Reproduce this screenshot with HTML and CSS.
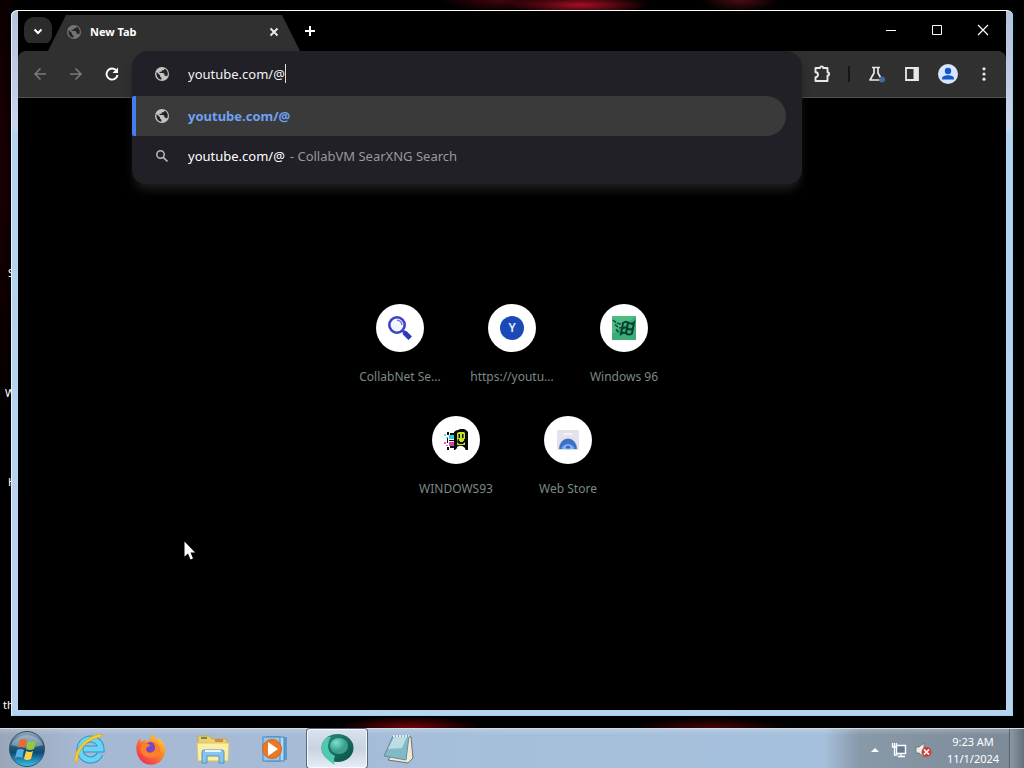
FILE: index.html
```html
<!DOCTYPE html>
<html lang="en">
<head>
<meta charset="utf-8">
<meta name="viewport" content="width=device-width, initial-scale=1">
<title>New Tab</title>
<link rel="stylesheet" href="styles.css">
</head>
<body>
<svg class="symbols" aria-hidden="true">
  <symbol id="globe" viewBox="0 0 16 16"><circle cx="8" cy="8" r="7" fill="currentColor"/><path fill="#242428" d="M2.600 6 6 9.200v1.300l1.500 1.300v1.800C4 13.500 1.800 10 2.600 6zM5.500 7h3.800l1.200 1.200v1.500H12l1 .9c1-1.600 1.100-4 .1-5.600-.5-1.100-1.500-1.900-2.300-2.300L9.600 4.200H7.800v1.600H5.500z"/></symbol>
</svg>
<main class="desktop">
  <span class="desk-label label-a">S</span>
  <span class="desk-label label-b">W</span>
  <span class="desk-label label-c">H</span>
  <span class="desk-label label-d">th</span>
  <section class="window">
    <header class="tabstrip">
      <button class="tab-search" aria-label="Search tabs"><svg width="12" height="12" viewBox="0 0 12 12"><path d="M2.500 4.500 6 8l3.500-3.500" fill="none" stroke="#fff" stroke-width="2"/></svg></button>
      <div class="tab">
        <svg class="tab-globe" width="16" height="16"><use href="#globe"/></svg>
        <span class="tab-title">New Tab</span>
        <button class="plain" aria-label="Close tab"><svg width="10" height="10" viewBox="0 0 10 10"><path d="m1.500 1.500 7 7m0-7-7 7" stroke="#eee" stroke-width="1.800"/></svg></button>
      </div>
      <button class="plain new-tab" aria-label="New tab"><svg width="12" height="12" viewBox="0 0 12 12"><path d="M6 1v10M1 6h10" stroke="#fff" stroke-width="2"/></svg></button>
      <div class="caption">
        <button class="plain" aria-label="Minimize"><svg width="12" height="12" viewBox="0 0 12 12"><path d="M1 6.500h10" stroke="#fff"/></svg></button>
        <button class="plain" aria-label="Maximize"><svg width="12" height="12" viewBox="0 0 12 12"><path d="M1.500 1.500h9v9h-9z" fill="none" stroke="#fff"/></svg></button>
        <button class="plain" aria-label="Close"><svg width="12" height="12" viewBox="0 0 12 12"><path d="m1 1 10 10M11 1 1 11" stroke="#fff" stroke-width="1.200"/></svg></button>
      </div>
    </header>
    <nav class="toolbar">
      <button class="tool dim" aria-label="Back"><svg width="14" height="14" viewBox="0 0 14 14"><path d="M13 7H2m5.500-5.500L2 7l5.500 5.500" fill="none" stroke="currentColor" stroke-width="1.600"/></svg></button>
      <button class="tool dim" aria-label="Forward"><svg width="14" height="14" viewBox="0 0 14 14"><path d="M1 7h11M6.500 1.500 12 7l-5.500 5.500" fill="none" stroke="currentColor" stroke-width="1.600"/></svg></button>
      <button class="tool" aria-label="Reload"><svg width="14" height="14" viewBox="0 0 14 14"><path d="M11.500 3.800A5.500 5.500 0 1 0 12.500 8" fill="none" stroke="#fff" stroke-width="1.900"/><path d="M13 .5v5.500H7.500z" fill="#fff"/></svg></button>
      <div class="omnibox">
        <div class="popup">
          <div class="entry">
            <svg class="lead" width="16" height="16"><use href="#globe"/></svg>
            <input class="address" type="text" aria-label="Address" size="13" value="youtube.com/@"><span class="caret"></span>
          </div>
          <a class="suggestion selected" href="#"><svg class="lead" width="16" height="16"><use href="#globe"/></svg><b>youtube.com/@</b></a>
          <a class="suggestion" href="#"><svg class="lead" width="16" height="16" viewBox="0 0 16 16"><circle cx="6.500" cy="6.500" r="3.700" fill="none" stroke="#bbb" stroke-width="1.500"/><path d="m9.300 9.300 4.200 4.200" stroke="#bbb" stroke-width="1.700"/></svg><span class="query">youtube.com/@</span><span class="engine">- CollabVM SearXNG Search</span></a>
        </div>
      </div>
      <button class="tool" aria-label="Extensions"><svg width="18" height="18" viewBox="0 0 18 18"><path d="M2.500 3H7a1.600 1.600 0 0 1 3.200 0h4.300v4.300a1.600 1.600 0 0 1 0 3.200V16h-12v-3.800a2.300 2.300 0 0 0 0-5z" fill="none" stroke="#e8e8e8" stroke-width="1.900" stroke-linejoin="round"/></svg></button>
      <span class="divider"></span>
      <button class="tool" aria-label="Experiments"><svg width="18" height="18" viewBox="0 0 18 18"><path d="M5 2.500h8M7 3v5L3 15h12l-4-7V3" fill="none" stroke="#e8e8e8" stroke-width="1.700" stroke-linejoin="round"/><circle cx="15" cy="14.500" r="3" fill="#44699f"/></svg></button>
      <button class="tool" aria-label="Side panel"><svg width="16" height="16" viewBox="0 0 16 16"><path d="M2 2h12v12H2z" fill="none" stroke="#e8e8e8" stroke-width="1.800"/><path d="M9.500 2H14v12H9.500z" fill="#e8e8e8"/></svg></button>
      <button class="tool" aria-label="Profile"><svg width="20" height="20" viewBox="0 0 20 20"><circle cx="10" cy="10" r="10" fill="#d6e6fb"/><circle cx="10" cy="7" r="3.200" fill="#1459cc"/><path d="M4 15.500v-1C4 12.500 7 11.300 10 11.300s6 1.200 6 3.200v1z" fill="#1459cc"/></svg></button>
      <button class="tool" aria-label="Menu"><svg width="16" height="16" viewBox="0 0 16 16"><g fill="#e8e8e8"><circle cx="8" cy="2.800" r="1.600"/><circle cx="8" cy="8" r="1.600"/><circle cx="8" cy="13.200" r="1.600"/></g></svg></button>
    </nav>
    <div class="page">
      <div class="shortcuts">
        <a class="shortcut" href="#"><span class="disc"><svg width="24" height="24" viewBox="0 0 24 24"><circle cx="9" cy="9" r="7.700" fill="#f4f6ff" stroke="#3d43c6" stroke-width="2.600"/><path d="M9 4.200A4.800 4.800 0 0 1 13.800 9" fill="none" stroke="#6c76e0" stroke-width="1.500"/><path d="m14.500 14.500 2 2" stroke="#3d43c6" stroke-width="3"/><path d="m16.200 16.200 6 6" stroke="#3038b8" stroke-width="5"/></svg></span><span>CollabNet Se...</span></a>
        <a class="shortcut" href="#"><span class="disc"><span class="letter">Y</span></span><span>https://youtu...</span></a>
        <a class="shortcut" href="#"><span class="disc"><svg width="24" height="24" viewBox="0 0 24 24"><path fill="#3cad74" d="M0 0h24v24H0z"/><path fill="#66ca92" d="M0 0h24L0 18z" opacity=".5"/><path d="M11 7q3-2.500 6 0 2.500 1.500 5-.5l-2 11q-2.500 2-5 .3-3-2-6 0zM16 6.500l-2 11M10.300 12.500q3-2 5.500 0t5 0" fill="none" stroke="#073e32" stroke-width="2"/><path d="M1 4q4 4 9 4M3 8.500q3 3.500 7 3.500M4 13q2 3.500 5 3.500" fill="none" stroke="#0b5944" stroke-width="1.700" stroke-dasharray="4 1"/></svg></span><span>Windows 96</span></a>
        <a class="shortcut" href="#"><span class="disc"><svg width="24" height="22" viewBox="0 0 24 22"><path d="M10 3q2-2 4-2l2-1h4l2 1 2 2v18h-2l-2-2h-7l-2 2h-1z" fill="#080808"/><path d="M13 4l2-1h5l1 1v12h-8z" fill="#c6e620"/><path d="M14.500 5H16v4h-1.500zM18 5h1.500v4H18zM14 10h1v2h1v1h3v-1h1v-2h1v3l-2 2h-4l-2-2z" fill="#111"/><path d="M13 18q4-3 8 1v2h-8z" fill="#fff"/><path d="M5 6h5v4H5z" fill="#35cbdc"/><path d="M5 13h5v4H5z" fill="#d943a9"/><path d="M3 3h2v3H3zm3 1h4v2H6zM3 18h2v3H3zm3-1h4v2H6zM5 11h5v1H5zM3 9h1v5H3z" fill="#111"/><path d="M0 5h2v2H0zm2 3h2v1H2z" fill="#5bdeea"/><path d="M0 13h2v2H0zm2 3h2v1H2z" fill="#e45cb8"/></svg></span><span>WINDOWS93</span></a>
        <a class="shortcut" href="#"><span class="disc"><svg width="22" height="20" viewBox="0 0 22 20"><rect width="22" height="20" rx="1" fill="#e3e3ea"/><rect x="6" y="3" width="10" height="2" rx="1" fill="#f3f3f6"/><path d="M2 19a9 10.500 0 0 1 18 0z" fill="#3f6fca"/><path d="M5 17q6-6 12 0v2H5z" fill="#78aaf0"/><path d="M8 19v-1a3 3 0 0 1 6 0v1z" fill="#2868c9" stroke="#9fc5f7"/></svg></span><span>Web Store</span></a>
      </div>
    </div>
  </section>
  <svg class="pointer" width="12" height="19" viewBox="0 0 12 19"><path d="M.5.500v15l3.500-3 2.500 6 2.500-1-2.500-6H11z" fill="#fff"/></svg>
</main>
<footer class="taskbar">
  <button class="start" aria-label="Start"><svg width="38" height="38" viewBox="0 0 38 38"><defs><linearGradient id="orb" x2="0" y2="1"><stop stop-color="#93a9b9"/><stop offset=".45" stop-color="#265777"/><stop offset=".6" stop-color="#0b4a75"/><stop offset="1" stop-color="#37c5ed"/></linearGradient></defs><circle cx="19" cy="19" r="17.500" fill="url(#orb)" stroke="#35516b"/><path d="M3 15a17 15 0 0 1 32 0Q20 20 3 15z" fill="#d6e2e9" opacity=".4"/><path d="M12 10q3-2 7 0l-2 8q-4-2-7 0z" fill="#ee6832"/><path d="M20 11q4 2 8 0l-2 8q-4 2-8 0z" fill="#94c83d"/><path d="M9 20q4-2 7 0l-2 8q-3-2-7 0z" fill="#51afe8"/><path d="M18 21q4 2 7 0l-2 8q-4 2-7 0z" fill="#ffd247"/></svg></button>
  <div class="apps">
    <button class="app" aria-label="Internet Explorer"><svg width="34" height="34" viewBox="0 0 34 34"><path d="M28 22a10.500 10.500 0 1 1 1-5H12" fill="none" stroke="#2897cb" stroke-width="7"/><path d="M28 22a10.500 10.500 0 1 1 1-5H12" fill="none" stroke="#6bd3f4" stroke-width="5"/><path d="M4 31C-1 24 12 3 30 2l-1 3C14 7 5 20 6 28z" fill="#f8cf2d" stroke="#d9a727" stroke-width=".7"/></svg></button>
    <button class="app" aria-label="Firefox"><svg width="32" height="32" viewBox="0 0 32 32"><defs><linearGradient id="fox" x1="1" y1="0" x2=".2" y2="1"><stop stop-color="#ffe64a"/><stop offset=".45" stop-color="#ff8a26"/><stop offset="1" stop-color="#ef2857"/></linearGradient></defs><path d="M17 1q3 2 5 6l2-2c6 5 8 12 5 18a14 14 0 0 1-26 0C0 16 1 10 5 5l1 4 4-2 1 2q5-2 6-8z" fill="url(#fox)"/><circle cx="16" cy="16" r="7" fill="#7747c9"/><path d="M7 11q5-2 9 2-5 0-5 4 3 5 8 1 3-5-2-9 8 1 8 8-2 8-10 8-8-1-10-9z" fill="#ff7e2b"/></svg></button>
    <button class="app" aria-label="Windows Explorer"><svg width="34" height="30" viewBox="0 0 34 30"><path d="M2 2h12l2 3h15v22H2z" fill="#ead16e" stroke="#c9ab4f"/><path d="M5 3h6v2H5z" fill="#7b8b50"/><path d="M19 5h8v3h-8z" fill="#d48c40"/><path d="M1 9h32l-1 18H2z" fill="#fbeea5" stroke="#d9c574"/><path d="M6 29V18q0-2 2-2h18q2 0 2 2v11h-5v-7H11v7z" fill="#87c5ed" stroke="#5291c1"/><path d="M9 17h16" stroke="#e3f6ff" stroke-width="2"/></svg></button>
    <button class="app" aria-label="Media Player"><svg width="28" height="26" viewBox="0 0 28 26"><path d="M8 1h18v23H8z" fill="#5a9bd2"/><path d="M5 1h18v24H5z" fill="#b4d8f1" stroke="#4b86bd"/><path d="M2 1h17v24H2z" fill="#98c6e7" stroke="#4b86bd"/><circle cx="11" cy="13" r="9.500" fill="#ed7824" stroke="#cb6723"/><path d="m7 6 10 7-10 7z" fill="#fff"/></svg></button>
    <button class="app active" aria-label="Chromium"><svg width="34" height="34" viewBox="0 0 34 34"><defs><linearGradient id="chrome" x2="1" y2="1"><stop stop-color="#2f8a7b"/><stop offset="1" stop-color="#064f45"/></linearGradient><radialGradient id="lens" cx=".35" cy=".3"><stop stop-color="#7be2cc"/><stop offset="1" stop-color="#3aa08d"/></radialGradient></defs><ellipse cx="17.500" cy="16" rx="16" ry="14" fill="url(#chrome)"/><path d="M8 5Q1 9 1.500 17 3 26 15 33q-2-5 0-9-7-3-7-10 0-5 3-9z" fill="#50c9b2"/><ellipse cx="19" cy="14" rx="9" ry="8" fill="url(#lens)"/></svg></button>
    <button class="app" aria-label="Notepad"><svg width="32" height="30" viewBox="0 0 32 30"><path d="m24 2 4 1 2 21-5 5-20-3z" fill="#eee9d7" stroke="#706f65"/><path d="M10 2h16l-3 24L1 22z" fill="#80bac6" stroke="#648d99"/><path d="M11 3h13l-5 11-14 1z" fill="#bedce4"/><path d="M10 2h16" stroke="#e7edef" stroke-width="2" stroke-dasharray="2 1"/></svg></button>
  </div>
  <div class="tray">
    <button class="plain tray-icon" aria-label="Show hidden icons"><svg width="8" height="4" viewBox="0 0 8 4"><path d="m4 0 4 4H0z" fill="#fff"/></svg></button>
    <button class="plain tray-icon" aria-label="Network"><svg width="16" height="16" viewBox="0 0 16 16"><path d="M5.500 3.500h9v8h-9z" fill="#687b8c" stroke="#fff" stroke-width="1.400"/><path d="M7 14.500h7M10 12v2M1.500 1v4h4V1M3.500 1v12h3" fill="none" stroke="#fff" stroke-width="1.300"/></svg></button>
    <button class="plain tray-icon" aria-label="Volume muted"><svg width="17" height="16" viewBox="0 0 17 16"><path d="M1 5h3l5-4v14l-5-4H1z" fill="#eee" stroke="#777"/><circle cx="11.500" cy="10" r="5" fill="#cf3e32"/><path d="m9 7.500 5 5m0-5-5 5" stroke="#fff" stroke-width="1.700"/></svg></button>
    <time class="clock"><span>9:23 AM</span><span>11/1/2024</span></time>
    <button class="show-desktop" aria-label="Show desktop"></button>
  </div>
</footer>
</body>
</html>
```
FILE: styles.css
```css
* { box-sizing: border-box; }
body {
  margin: 0;
  height: 100vh;
  display: flex;
  flex-direction: column;
  overflow: hidden;
  background: #000;
  color: #fff;
  font: 13px/20px "Noto Sans", "Open Sans", sans-serif;
}
button { border: 0; margin: 0; padding: 0; background: none; color: inherit; font: inherit; display: flex; align-items: center; justify-content: center; }
a { color: inherit; text-decoration: none; }
svg { display: block; flex: none; }
.symbols { position: absolute; width: 0; height: 0; }

.desktop {
  position: relative;
  flex: 1;
  display: flex;
  padding: 10px 11px 12px;
  background:
    radial-gradient(ellipse 70px 10px at 580px 5px, #a70f22, transparent),
    radial-gradient(ellipse 60px 12px at 500px 0, #42060d, transparent),
    radial-gradient(ellipse 40px 12px at 740px 0, #4a0b12, transparent),
    radial-gradient(ellipse 70px 12px at 410px 100%, #770307, transparent),
    radial-gradient(ellipse 80px 10px at 710px 100%, #4a0204, transparent),
    radial-gradient(ellipse 20px 300px at 0 160px, #1b0003, transparent),
    #000;
}
.desk-label { position: absolute; font-size: 11px; line-height: 16px; }
.label-a { left: 8px; top: 265px; }
.label-b { left: 5px; top: 385px; }
.label-c { left: 8px; top: 474px; }
.label-d { left: 3px; top: 697px; }
.pointer { position: absolute; left: 184px; top: 541px; }

.window {
  position: relative;
  flex: 1;
  display: flex;
  flex-direction: column;
  padding: 0 7px 6px;
  border-top: 1px solid #fff;
  border-radius: 6px 6px 0 0;
  background: linear-gradient(#b3c3da 0, #c9d5eb 118px, #b3d3ee 122px, #b9d3ef 100%);
  box-shadow: inset 1px 0 #e6f2ff, inset -1px -1px #8fd9f2;
}
.tabstrip { display: flex; height: 40px; padding: 4px 0 0 6px; background: #000; }
.tab-search { width: 28px; height: 28px; margin: 2px -4px 0 0; border-radius: 10px; background: #2b2b2b; }
.tab {
  display: flex;
  align-items: center;
  width: 252px;
  padding: 0 20px 3px 18px;
  background: #303030;
  clip-path: polygon(18px 0, 234px 0, 252px 100%, 0 100%);
}
.tab-globe { color: #747474; }
.tab-title { flex: 1; padding-left: 8px; font-size: 11px; font-weight: 700; }
.plain { width: 12px; }
.new-tab { width: 20px; padding-bottom: 4px; }
.caption { display: flex; margin-left: auto; padding-bottom: 6px; }
.caption .plain { width: 46px; }

.toolbar {
  display: flex;
  height: 47px;
  padding: 0 4px;
  border-bottom: 1px solid #505050;
  border-radius: 8px 8px 0 0;
  background: #303030;
  box-shadow: 0 -8px #000;
}
.tool { width: 36px; height: 46px; }
.dim { color: #797979; }
.divider { width: 2px; height: 16px; margin: 15px 8px; background: #151515; }
.omnibox { position: relative; flex: 1; margin: 0 2px; }
.popup {
  position: absolute;
  z-index: 1;
  inset: 0 0 auto;
  padding-bottom: 8px;
  border-radius: 16px 16px 14px 14px;
  background: #202026;
  box-shadow: 0 8px 10px -2px #1c1c1c;
}
.entry, .suggestion { display: flex; align-items: center; padding-left: 22px; }
.entry { height: 45px; }
.suggestion { height: 40px; }
.lead { margin-right: 18px; color: #c4c4c4; }
.address {
  width: auto;
  field-sizing: content;
  padding: 0;
  border: 0;
  outline: 0;
  background: none;
  color: #f2f2f2;
  font: inherit;
}
.caret { width: 1px; height: 19px; background: #ddd; }
.selected {
  margin-right: 16px;
  padding-left: 18px;
  border-left: 4px solid #437df0;
  border-radius: 2px 20px 20px 2px;
  background: #3a3a3a;
  color: #6da2f5;
}
.engine { padding-left: 5px; color: #999; }

.page { flex: 1; background: #000; }
.shortcuts { display: flex; flex-wrap: wrap; justify-content: center; width: 336px; margin: 0 auto; padding-top: 206px; }
.shortcut { display: flex; flex-direction: column; align-items: center; gap: 15px; width: 112px; height: 112px; color: #7b8986; font-size: 12px; white-space: nowrap; }
.disc { display: flex; align-items: center; justify-content: center; width: 48px; height: 48px; border-radius: 50%; background: #fff; }
.letter { width: 24px; height: 24px; border-radius: 50%; background: #1c49b8; color: #e5f0ff; font-weight: 600; line-height: 24px; text-align: center; }

.taskbar {
  display: flex;
  height: 40px;
  border-top: 1px solid #d2dbe4;
  background:
    linear-gradient(#ffffff33, transparent 6px),
    linear-gradient(90deg, #98a6b8, #a6b8d2 80px, #a5bfdb 50%, #a5c0dc calc(100% - 200px), #8899a9 calc(100% - 165px), #7c8996);
}
.start { width: 54px; }
.apps { display: flex; flex: 1; gap: 2px; padding-left: 5px; }
.app { width: 60px; height: 39px; }
.active { border: 1px solid #f7fbff; border-radius: 3px; background: linear-gradient(#d9e2ed, #c8d3e2 50%, #e4edf5); box-shadow: 0 0 0 1px #58687b; }
.tray { display: flex; }
.tray-icon { width: 24px; padding-top: 3px; }
.clock { display: flex; flex-direction: column; width: 74px; padding: 4px 0 0 2px; text-align: center; font-size: 11px; line-height: 17px; }
.show-desktop { width: 15px; border-left: 1px solid #56636f; background: linear-gradient(90deg, #8c9aa6, #64717d); }
```
